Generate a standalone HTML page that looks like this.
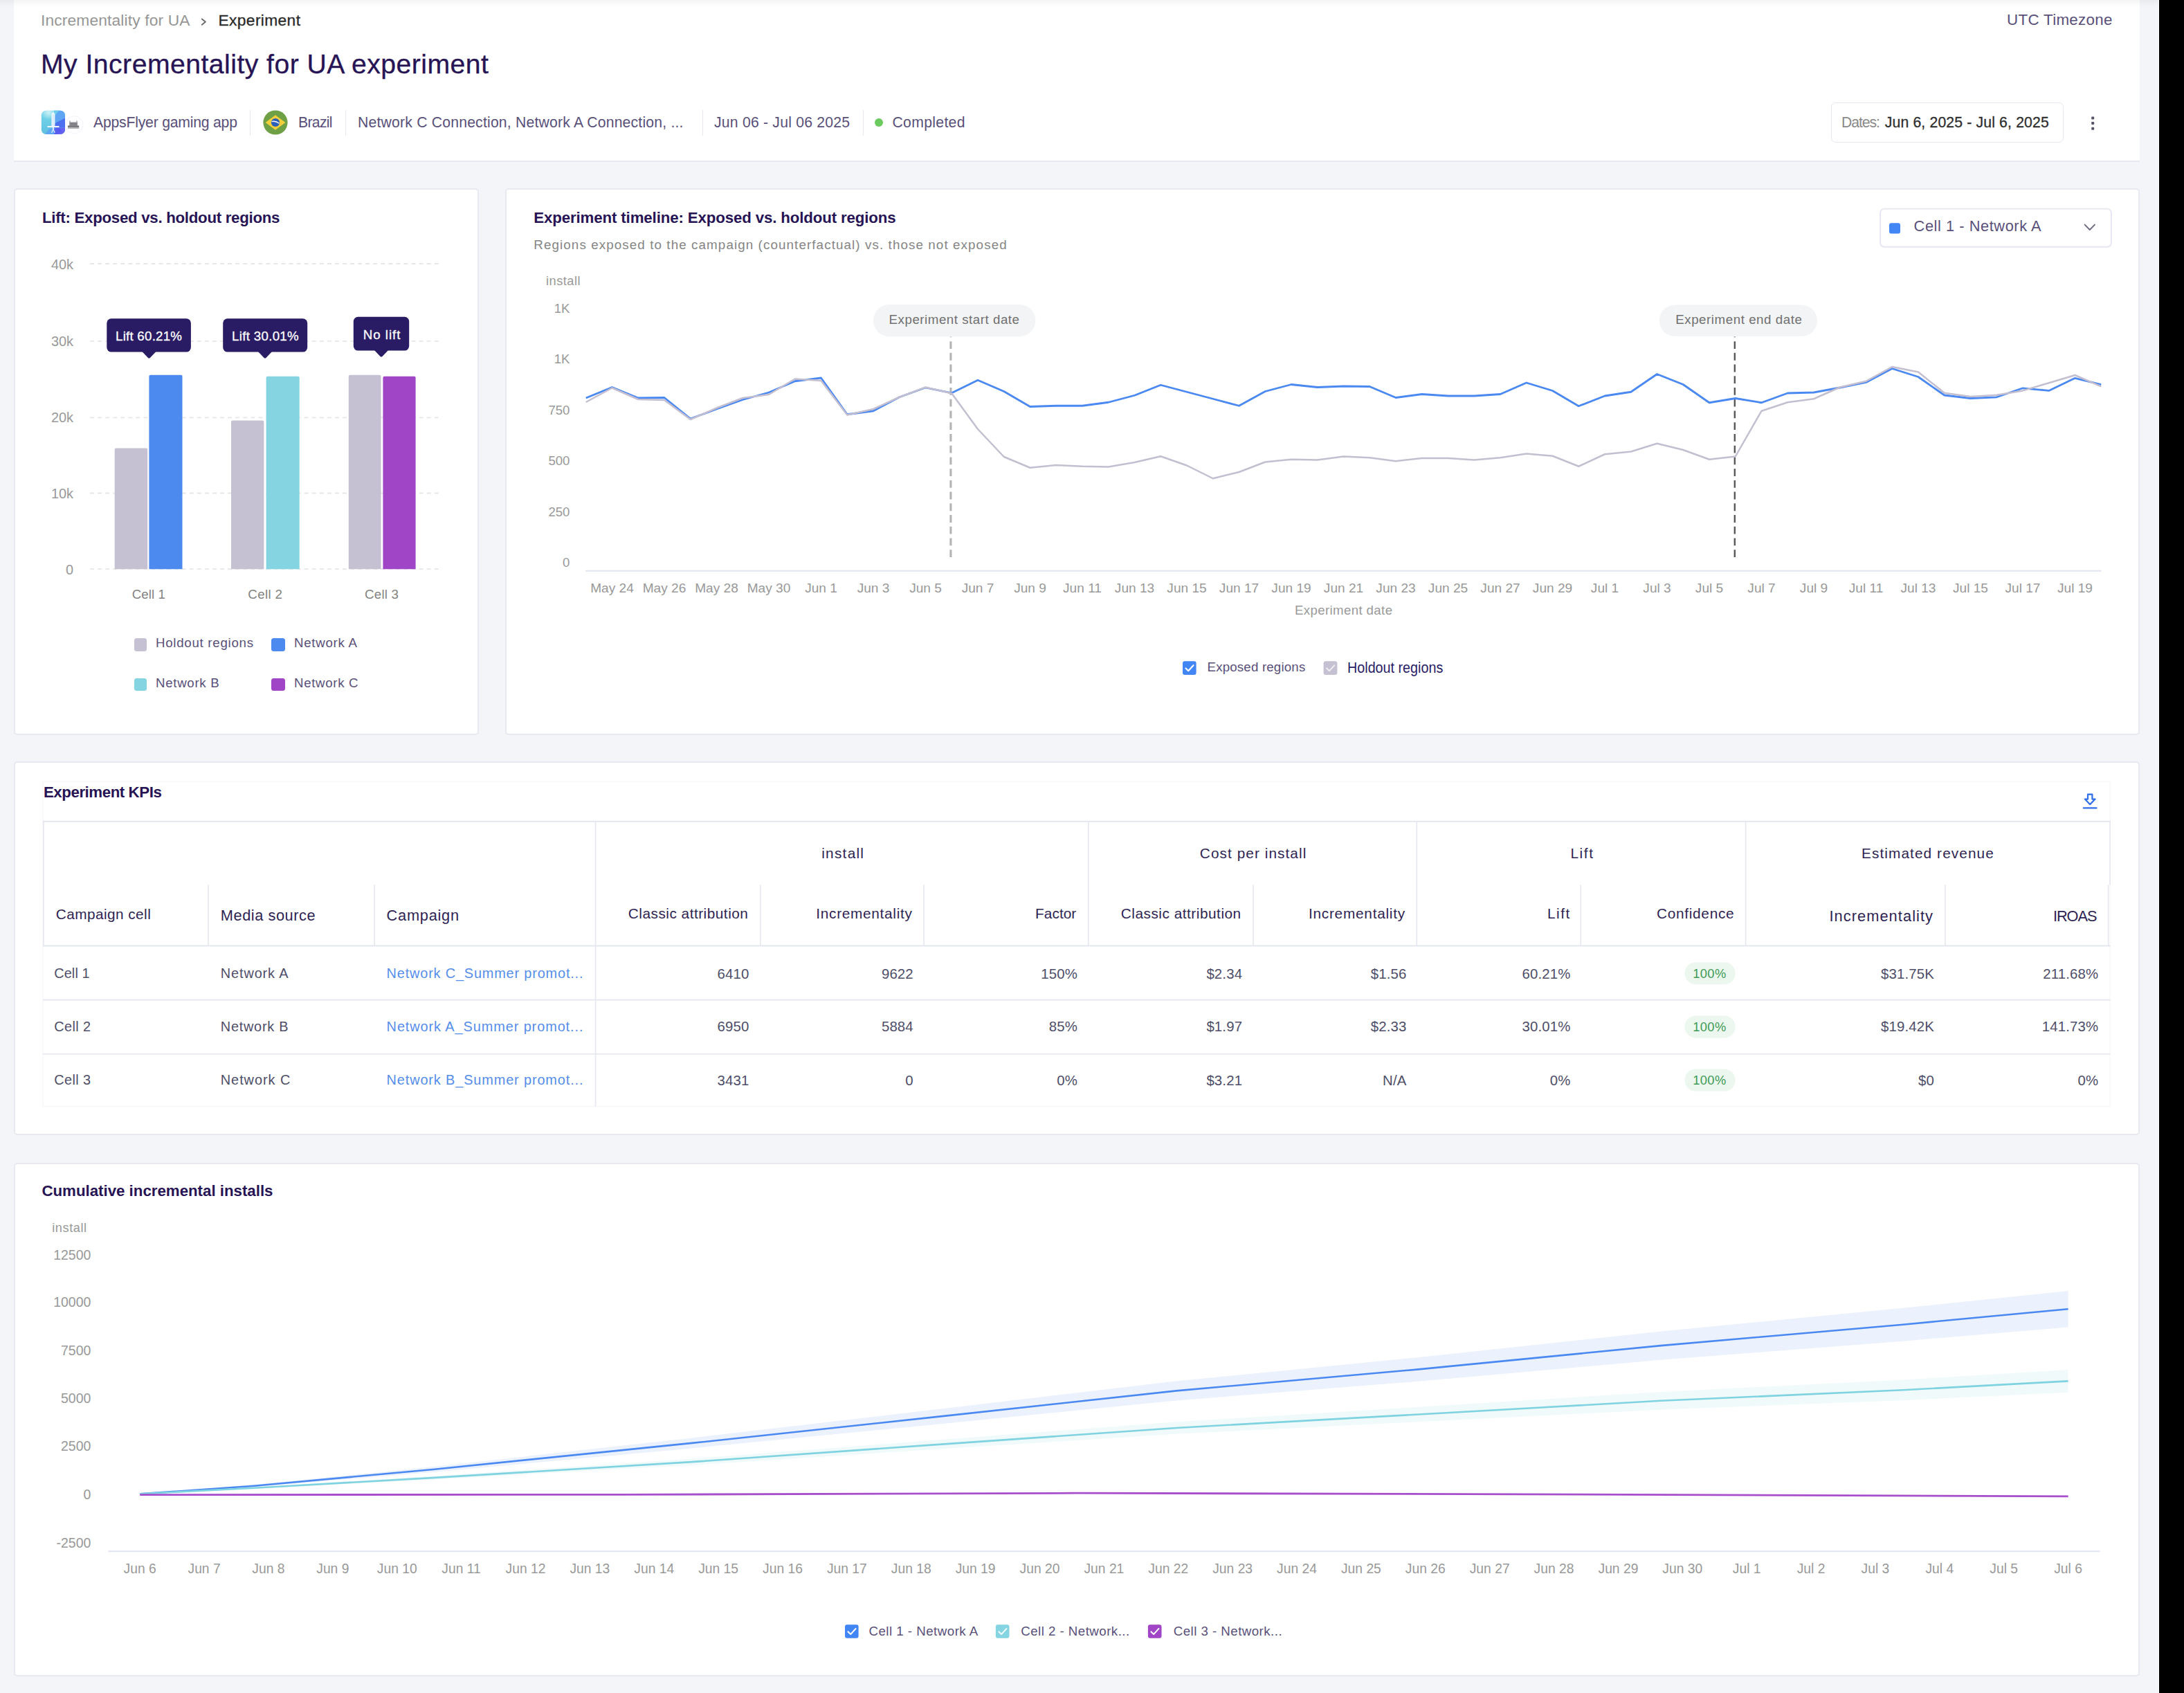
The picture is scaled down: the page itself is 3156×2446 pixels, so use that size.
<!DOCTYPE html>
<html lang="en"><head><meta charset="utf-8"><title>My Incrementality for UA experiment</title>
<style>
html,body{margin:0;padding:0;}
body{width:3156px;height:2446px;overflow:hidden;background:#000;font-family:"Liberation Sans", sans-serif;}
#page{position:relative;width:3156px;height:2446px;overflow:hidden;background:#f4f5f8;}
.a{position:absolute;}
.t{position:absolute;white-space:nowrap;line-height:1;font-family:"Liberation Sans", sans-serif;}
svg{position:absolute;left:0;top:0;overflow:visible;}
</style></head><body><div id="page">
<div class="a" style="left:19.90px;top:0.00px;width:3072.10px;height:234.20px;background:#fff;border-bottom:2.3px solid #e7e8f0;box-sizing:border-box;"></div>
<div class="a" style="left:0;top:0;width:3120px;height:10px;background:linear-gradient(to bottom,rgba(0,0,0,0.042),rgba(0,0,0,0.022) 45%,rgba(0,0,0,0));"></div>
<div class="a" style="left:3118.80px;top:0.00px;width:1.60px;height:2446.00px;background:#fff;"></div>
<div class="a" style="left:3120.20px;top:0.00px;width:35.80px;height:2446.00px;background:#000;"></div>
<svg width="3156" height="2446"><polyline points="291.8,27.4 296.9,31.6 291.8,35.8" fill="none" stroke="#6a6a6a" stroke-width="1.9" stroke-linecap="round" stroke-linejoin="round"/></svg>
<svg width="3156" height="2446">
<defs><linearGradient id="ig" x1="0" y1="0" x2="0" y2="1"><stop offset="0" stop-color="#86dcec"/><stop offset="0.35" stop-color="#6dd0e6"/><stop offset="1" stop-color="#60c0e2"/></linearGradient>
<radialGradient id="ih" cx="0.3" cy="0.08" r="0.3"><stop offset="0" stop-color="#d4f4f8" stop-opacity="0.9"/><stop offset="1" stop-color="#d4f4f8" stop-opacity="0"/></radialGradient>
<clipPath id="ic"><rect x="59.8" y="159.8" width="34.2" height="34.3" rx="6.8"/></clipPath></defs>
<rect x="59.8" y="159.8" width="34.2" height="34.3" rx="6.8" fill="url(#ig)"/>
<g clip-path="url(#ic)">
<rect x="59.8" y="159.8" width="34.2" height="34.3" fill="url(#ih)"/>
<path d="M78.2 159 L95 159 L95 170.1 L82.2 176.4 L82.2 184.4 L78.2 184.4 Z" fill="#5fa5f3"/>
<path d="M78.2 159 L86 159 L80 166 L78.2 170 Z" fill="#6fdbe8" opacity="0.75"/>
<path d="M82.2 176.4 L95 170.1 L95 184.4 L78.2 184.4 L78.2 180 Z" fill="#4c70f0"/>
<path d="M78.2 184.4 L95 184.4 L95 195 L78.2 195 Z" fill="#6862f3"/>
<path d="M64.7 195 L70.5 186.8 L78.2 184.4 L82 186 L80 195 Z" fill="#5da6f2"/>
<path d="M78.2 186 L86 184.4 L90 190 L80 195 L78.2 195 Z" fill="#5458ee" opacity="0.8"/>
</g>
<path d="M76.9 161.8 L79.4 164.6 L79.4 182.4 L74.4 182.4 L74.4 164.6 Z" fill="#f0f7ff" opacity="0.95"/>
<rect x="76.2" y="165" width="1.4" height="16.5" fill="#cfe2f8" opacity="0.8"/>
<rect x="68.3" y="182.1" width="17.4" height="2" rx="0.8" fill="#f4f8ff"/>
<rect x="76" y="184" width="1.9" height="2.8" fill="#e8eeff" opacity="0.9"/>
<path d="M74.6 191.7 L76.95 186.6 L79.3 191.7" fill="none" stroke="#e9efff" stroke-width="1.3" opacity="0.95"/>
<circle cx="107.4" cy="180.3" r="12.2" fill="#fff"/>
<circle cx="107.4" cy="180.3" r="12.5" fill="none" stroke="#f3f5fb" stroke-width="1.2"/>
<path d="M98 185.7 L98 181.6 L100.2 181.6 L100.2 176.6 L112 176.6 L112 181.6 L114.1 181.6 L114.1 185.7 Z" fill="#8e8e92"/>
<rect x="98" y="181.6" width="16.1" height="2.3" fill="#76777b"/>
<rect x="98" y="183.9" width="16.1" height="1.8" fill="#b9b9bb"/>
<rect x="100.3" y="174.3" width="1.3" height="2.6" fill="#a2a2a5"/>
<rect x="110.3" y="174.3" width="1.3" height="2.6" fill="#a2a2a5"/>
<rect x="101.8" y="178.3" width="8.6" height="1.6" fill="#7a7a7e"/>
</svg>
<div class="a" style="left:360.50px;top:158.50px;width:1.40px;height:37.00px;background:#e8e8f0;"></div>
<svg width="3156" height="2446">
<circle cx="398" cy="177" r="17.6" fill="#70a045"/>
<path d="M383.6 177 L398 166.2 L412.4 177 L398 187.8 Z" fill="#f3cf3a"/>
<circle cx="398" cy="177" r="6.1" fill="#2c5fb8"/>
<path d="M392.6 175.6 Q398 174.2 403.5 178.2" fill="none" stroke="#fff" stroke-width="1.4"/>
</svg>
<div class="a" style="left:498.50px;top:158.50px;width:1.40px;height:37.00px;background:#e8e8f0;"></div>
<div class="a" style="left:1014.50px;top:158.50px;width:1.40px;height:37.00px;background:#e8e8f0;"></div>
<div class="a" style="left:1246.50px;top:158.50px;width:1.40px;height:37.00px;background:#e8e8f0;"></div>
<div class="a" style="left:1264px;top:171px;width:12.4px;height:12.4px;border-radius:50%;background:#6ccb5f;"></div>
<div class="a" style="left:2646.00px;top:148.20px;width:336.00px;height:57.60px;background:#fff;border:1.9px solid #e5e6f1;box-sizing:border-box;border-radius:6.5px;"></div>
<svg width="3156" height="2446"><rect x="3022.2" y="168.4" width="4" height="4" rx="1.2" fill="#55556a"/><rect x="3022.2" y="176" width="4" height="4" rx="1.2" fill="#55556a"/><rect x="3022.2" y="183.8" width="4" height="4" rx="1.2" fill="#55556a"/></svg>
<div class="a" style="left:19.90px;top:271.80px;width:672.20px;height:790.30px;background:#fff;border:2.1px solid #e7e8f0;box-sizing:border-box;border-radius:5px;"></div>
<svg width="3156" height="2446"><line x1="130" y1="381" x2="636" y2="381" stroke="#e7e7ea" stroke-width="1.8" stroke-dasharray="6 5.06"/><line x1="130" y1="492.8" x2="636" y2="492.8" stroke="#e7e7ea" stroke-width="1.8" stroke-dasharray="6 5.06"/><line x1="130" y1="603.3" x2="636" y2="603.3" stroke="#e7e7ea" stroke-width="1.8" stroke-dasharray="6 5.06"/><line x1="130" y1="712.5" x2="636" y2="712.5" stroke="#e7e7ea" stroke-width="1.8" stroke-dasharray="6 5.06"/><line x1="130" y1="822.2" x2="636" y2="822.2" stroke="#e7e7ea" stroke-width="1.8" stroke-dasharray="6 5.06"/><path d="M165.7 822.2 L165.7 649.6 Q165.7 647.6 167.7 647.6 L211.2 647.6 Q213.2 647.6 213.2 649.6 L213.2 822.2 Z" fill="#c5c1d2"/><path d="M215.4 822.2 L215.4 543.8 Q215.4 541.8 217.4 541.8 L261.5 541.8 Q263.5 541.8 263.5 543.8 L263.5 822.2 Z" fill="#4d8af0"/><path d="M334 822.2 L334 609.5 Q334 607.5 336 607.5 L379.4 607.5 Q381.4 607.5 381.4 609.5 L381.4 822.2 Z" fill="#c5c1d2"/><path d="M384.6 822.2 L384.6 545.7 Q384.6 543.7 386.6 543.7 L430.7 543.7 Q432.7 543.7 432.7 545.7 L432.7 822.2 Z" fill="#84d4e2"/><path d="M503.8 822.2 L503.8 543.8 Q503.8 541.8 505.8 541.8 L548.6 541.8 Q550.6 541.8 550.6 543.8 L550.6 822.2 Z" fill="#c5c1d2"/><path d="M553.4 822.2 L553.4 545.7 Q553.4 543.7 555.4 543.7 L598.6 543.7 Q600.6 543.7 600.6 545.7 L600.6 822.2 Z" fill="#a045c5"/><rect x="154.3" y="460.3" width="121.59999999999997" height="48.30000000000001" rx="6.5" fill="#2a1c64"/><path d="M205.4 508.1 L225.4 508.1 L216.6 517.2 Q215.4 518 214.20000000000002 517.2 Z" fill="#2a1c64"/><rect x="322.2" y="460.3" width="122.0" height="48.30000000000001" rx="6.5" fill="#2a1c64"/><path d="M373 508.1 L393 508.1 L384.2 517.2 Q383 518 381.8 517.2 Z" fill="#2a1c64"/><rect x="510.8" y="457.8" width="80.40000000000003" height="48.80000000000001" rx="6.5" fill="#2a1c64"/><path d="M541 506.1 L561 506.1 L552.2 515.2 Q551 516 549.8 515.2 Z" fill="#2a1c64"/></svg>
<div class="a" style="left:194.00px;top:922.00px;width:18.00px;height:19.00px;background:#c5c1d2;border-radius:3.5px;"></div>
<div class="a" style="left:392.00px;top:922.00px;width:20.00px;height:19.00px;background:#4d8af0;border-radius:3.5px;"></div>
<div class="a" style="left:194.00px;top:980.00px;width:18.00px;height:18.00px;background:#84d4e2;border-radius:3.5px;"></div>
<div class="a" style="left:392.00px;top:980.00px;width:20.00px;height:18.00px;background:#a045c5;border-radius:3.5px;"></div>
<div class="a" style="left:730.00px;top:271.80px;width:2361.90px;height:790.30px;background:#fff;border:2.1px solid #e7e8f0;box-sizing:border-box;border-radius:5px;"></div>
<svg width="3156" height="2446"><rect x="1262" y="440" width="234.4" height="46.2" rx="23.1" fill="#f3f4f6"/><rect x="2397.8" y="440.4" width="228.2" height="45.4" rx="22.7" fill="#f3f4f6"/><line x1="846" y1="824.8" x2="3036.5" y2="824.8" stroke="#e1e5f1" stroke-width="2"/><line x1="1373.9" y1="486.4" x2="1373.9" y2="806.5" stroke="#b4b4b4" stroke-width="3.1" stroke-dasharray="10.8 5.93" stroke-dashoffset="10"/><line x1="2506.8" y1="486.4" x2="2506.8" y2="806.5" stroke="#585858" stroke-width="2.4" stroke-dasharray="10.8 5.93" stroke-dashoffset="10"/><polyline points="846.75,575.00 884.50,559.50 922.25,575.00 960.00,574.50 997.75,605.00 1035.50,591.00 1073.25,577.50 1111.00,567.00 1148.75,550.75 1186.50,546.00 1224.25,598.75 1262.00,593.75 1299.75,573.75 1337.50,560.00 1375.25,567.80 1413.00,549.25 1450.75,565.50 1488.50,587.50 1526.25,586.25 1564.00,586.25 1601.75,581.25 1639.50,571.25 1677.25,556.25 1715.00,566.25 1752.75,576.25 1790.50,586.25 1828.25,565.50 1866.00,555.50 1903.75,559.50 1941.50,558.00 1979.25,558.50 2017.00,574.50 2054.75,569.50 2092.50,572.00 2130.25,572.00 2168.00,569.50 2205.75,553.00 2243.50,564.50 2281.25,586.75 2319.00,572.00 2356.75,566.25 2394.50,540.50 2432.25,555.50 2470.00,581.75 2507.75,575.50 2545.50,581.75 2583.25,568.00 2621.00,567.00 2658.75,560.00 2696.50,552.50 2734.25,532.50 2772.00,544.50 2809.75,571.00 2847.50,575.50 2885.25,573.80 2923.00,560.80 2960.75,564.40 2998.50,546.30 3036.25,555.70" fill="none" stroke="#4a88f2" stroke-width="2.8" stroke-linejoin="round" stroke-linecap="butt"/><polyline points="846.75,581.00 884.50,560.50 922.25,577.00 960.00,578.00 997.75,606.00 1035.50,589.50 1073.25,575.00 1111.00,570.00 1148.75,547.50 1186.50,550.00 1224.25,599.50 1262.00,591.00 1299.75,573.75 1337.50,559.50 1375.25,568.20 1413.00,620.00 1450.75,660.00 1488.50,675.75 1526.25,672.00 1564.00,673.75 1601.75,674.50 1639.50,668.00 1677.25,659.25 1715.00,672.50 1752.75,691.25 1790.50,682.00 1828.25,667.50 1866.00,663.75 1903.75,664.50 1941.50,659.50 1979.25,661.25 2017.00,666.25 2054.75,662.00 2092.50,662.00 2130.25,664.50 2168.00,661.25 2205.75,655.50 2243.50,658.75 2281.25,673.75 2319.00,656.25 2356.75,652.50 2394.50,640.75 2432.25,650.00 2470.00,663.75 2507.75,659.50 2545.50,593.75 2583.25,581.25 2621.00,576.25 2658.75,559.50 2696.50,550.75 2734.25,530.00 2772.00,537.50 2809.75,567.80 2847.50,573.10 2885.25,570.80 2923.00,564.40 2960.75,553.20 2998.50,542.00 3036.25,558.30" fill="none" stroke="#c3bfd0" stroke-width="2.5" stroke-linejoin="round" stroke-linecap="butt"/><rect x="2717.1" y="301.6" width="333.8" height="55.2" rx="6" fill="#fff" stroke="#e5e6f1" stroke-width="1.9"/><rect x="2730" y="322.2" width="16" height="15.4" rx="3" fill="#4285f4"/><polyline points="3012.6,324.6 3019.8,332 3027,324.6" fill="none" stroke="#6f6a82" stroke-width="1.9" stroke-linecap="round" stroke-linejoin="round"/><rect x="1709" y="955.3" width="19.6" height="19.6" rx="3" fill="#4285f4"/><polyline points="1713.51,965.49 1717.23,969.22 1724.48,961.18" fill="none" stroke="#fff" stroke-width="2.1" stroke-linecap="round" stroke-linejoin="round"/><rect x="1912.6" y="955.3" width="19.8" height="19.8" rx="3" fill="#c5c1d2"/><polyline points="1917.15,965.60 1920.92,969.36 1928.24,961.24" fill="none" stroke="#eeecf3" stroke-width="2.1" stroke-linecap="round" stroke-linejoin="round"/></svg>
<div class="a" style="left:19.90px;top:1100.00px;width:3072.00px;height:540.10px;background:#fff;border:2.1px solid #e7e8f0;box-sizing:border-box;border-radius:5px;"></div>
<svg width="3156" height="2446"><rect x="62" y="1129.2" width="2987.4" height="469.4" fill="none" stroke="#f8f8fa" stroke-width="1.6"/><line x1="62" y1="1186.7" x2="3049.8" y2="1186.7" stroke="#e5e7f0" stroke-width="2"/><line x1="62" y1="1366.4" x2="3049.8" y2="1366.4" stroke="#e5e7f0" stroke-width="2"/><line x1="62" y1="1444.6" x2="3049.8" y2="1444.6" stroke="#e5e7f0" stroke-width="1.6"/><line x1="62" y1="1522.8" x2="3049.8" y2="1522.8" stroke="#e5e7f0" stroke-width="1.6"/><line x1="62.9" y1="1186.7" x2="62.9" y2="1366.4" stroke="#e5e7f0" stroke-width="1.6"/><line x1="301" y1="1278.3" x2="301" y2="1366.4" stroke="#e5e7f0" stroke-width="1.6"/><line x1="541.2" y1="1278.3" x2="541.2" y2="1366.4" stroke="#e5e7f0" stroke-width="1.6"/><line x1="860.6" y1="1186.7" x2="860.6" y2="1599" stroke="#e5e7f0" stroke-width="1.6"/><line x1="1098.7" y1="1278.3" x2="1098.7" y2="1366.4" stroke="#e5e7f0" stroke-width="1.6"/><line x1="1335" y1="1278.3" x2="1335" y2="1366.4" stroke="#e5e7f0" stroke-width="1.6"/><line x1="1572.8" y1="1186.7" x2="1572.8" y2="1366.4" stroke="#e5e7f0" stroke-width="1.6"/><line x1="1811" y1="1278.3" x2="1811" y2="1366.4" stroke="#e5e7f0" stroke-width="1.6"/><line x1="2047.3" y1="1186.7" x2="2047.3" y2="1366.4" stroke="#e5e7f0" stroke-width="1.6"/><line x1="2284.3" y1="1278.3" x2="2284.3" y2="1366.4" stroke="#e5e7f0" stroke-width="1.6"/><line x1="2522.6" y1="1186.7" x2="2522.6" y2="1366.4" stroke="#e5e7f0" stroke-width="1.6"/><line x1="2810.9" y1="1278.3" x2="2810.9" y2="1366.4" stroke="#e5e7f0" stroke-width="1.6"/><line x1="3049" y1="1186.7" x2="3049" y2="1278.3" stroke="#e5e7f0" stroke-width="1.6"/><line x1="3046.6" y1="1278.3" x2="3046.6" y2="1366.4" stroke="#e5e7f0" stroke-width="1.6"/><g fill="none" stroke="#2f6fe8" stroke-width="2.2" stroke-linejoin="round" stroke-linecap="round"><path d="M3017 1147.6 h6.4 v7 h4.2 l-7.4 7.6 l-7.4 -7.6 h4.2 z"/><line x1="3010.8" y1="1167.4" x2="3029.6" y2="1167.4"/></g><rect x="2434.4" y="1390.3" width="73.3" height="32" rx="16" fill="#ecf8ef"/><rect x="2434.4" y="1467.5" width="73.3" height="32" rx="16" fill="#ecf8ef"/><rect x="2434.4" y="1544.6" width="73.3" height="32" rx="16" fill="#ecf8ef"/></svg>
<div class="a" style="left:19.90px;top:1680.20px;width:3072.00px;height:741.70px;background:#fff;border:2.1px solid #e7e8f0;box-sizing:border-box;border-radius:5px;"></div>
<svg width="3156" height="2446"><line x1="156.4" y1="2241.3" x2="3034.6" y2="2241.3" stroke="#e1e5f1" stroke-width="2"/><polygon points="202.2,2158.4 367.5,2145.1 628.5,2118.7 1000.0,2077.4 1350.0,2036.6 1700.0,1995.3 2050.0,1961.0 2400.0,1923.4 2750.0,1889.7 2988.6,1865.1 2988.6,1917.5 2750.0,1937.7 2400.0,1964.8 2050.0,1995.8 1700.0,2023.5 1350.0,2058.2 1000.0,2092.4 628.5,2126.7 367.5,2148.3 202.2,2158.4" fill="#ecf2fd"/><polygon points="202.2,2158.4 367.5,2148.7 628.5,2132.4 1000.0,2107.4 1350.0,2080.7 1700.0,2054.2 2050.0,2032.7 2400.0,2010.9 2750.0,1993.4 2988.6,1979.1 2988.6,2011.7 2750.0,2023.2 2400.0,2036.7 2050.0,2054.3 1700.0,2071.8 1350.0,2094.1 1000.0,2116.8 628.5,2137.4 367.5,2150.7 202.2,2158.4" fill="#f0fafb"/><polyline points="202.2,2158.4 367.5,2146.7 628.5,2122.7 1000.0,2084.9 1350.0,2047.4 1700.0,2009.4 2050.0,1978.4 2400.0,1944.1 2750.0,1913.7 2988.6,1891.3" fill="none" stroke="#4a88f2" stroke-width="2.6" stroke-linejoin="round"/><polyline points="202.2,2158.4 367.5,2149.7 628.5,2134.9 1000.0,2112.1 1350.0,2087.4 1700.0,2063.0 2050.0,2043.5 2400.0,2023.8 2750.0,2008.3 2988.6,1995.4" fill="none" stroke="#7fd3e0" stroke-width="2.6" stroke-linejoin="round"/><polyline points="202.2,2159.6 900.0,2159.4 1556.0,2157.2 2200.0,2158.8 2988.6,2161.9" fill="none" stroke="#a74fcb" stroke-width="2.8" stroke-linejoin="round"/><rect x="1221" y="2347.2" width="19.6" height="19.6" rx="3" fill="#4285f4"/><polyline points="1225.51,2357.39 1229.23,2361.12 1236.48,2353.08" fill="none" stroke="#fff" stroke-width="2.1" stroke-linecap="round" stroke-linejoin="round"/><rect x="1438.9" y="2347.2" width="19.6" height="19.6" rx="3" fill="#84d4e2"/><polyline points="1443.41,2357.39 1447.13,2361.12 1454.38,2353.08" fill="none" stroke="#f2fbfc" stroke-width="2.1" stroke-linecap="round" stroke-linejoin="round"/><rect x="1658.9" y="2347.2" width="19.6" height="19.6" rx="3" fill="#a045c5"/><polyline points="1663.41,2357.39 1667.13,2361.12 1674.38,2353.08" fill="none" stroke="#fff" stroke-width="2.1" stroke-linecap="round" stroke-linejoin="round"/></svg>
<span class="t" id="t0" style="top:17.60px;font-size:22.8px;color:#969696;letter-spacing:0.133px;left:59.00px;">Incrementality for UA</span>
<span class="t" id="t1" style="top:17.60px;font-size:22.8px;color:#2a2a2a;letter-spacing:0.354px;-webkit-text-stroke:0.3px currentColor;left:315.50px;">Experiment</span>
<span class="t" id="t2" style="top:17.64px;font-size:22.4px;color:#595079;letter-spacing:0.290px;left:2900.00px;">UTC Timezone</span>
<span class="t" id="t3" style="top:72.82px;font-size:39.2px;color:#271454;letter-spacing:0.454px;-webkit-text-stroke:0.3px currentColor;left:59.00px;">My Incrementality for UA experiment</span>
<span class="t" id="t4" style="top:166.05px;font-size:21.2px;color:#595079;letter-spacing:-0.211px;left:135.00px;">AppsFlyer gaming app</span>
<span class="t" id="t5" style="top:166.05px;font-size:21.2px;color:#595079;letter-spacing:-0.697px;left:431.00px;">Brazil</span>
<span class="t" id="t6" style="top:165.95px;font-size:21.2px;color:#595079;letter-spacing:0.193px;left:517.00px;">Network C Connection, Network A Connection, ...</span>
<span class="t" id="t7" style="top:166.05px;font-size:21.2px;color:#595079;letter-spacing:0.210px;left:1032.00px;">Jun 06 - Jul 06 2025</span>
<span class="t" id="t8" style="top:166.05px;font-size:21.2px;color:#595079;letter-spacing:0.316px;left:1289.50px;">Completed</span>
<span class="t" id="t9" style="top:166.05px;font-size:21.2px;color:#8a8a8a;letter-spacing:-1.050px;left:2661.00px;">Dates:</span>
<span class="t" id="t10" style="top:166.05px;font-size:21.2px;color:#2e2e2e;letter-spacing:0.157px;-webkit-text-stroke:0.3px currentColor;left:2723.75px;">Jun 6, 2025 - Jul 6, 2025</span>
<span class="t" id="t11" style="top:303.92px;font-size:22.3px;color:#271454;font-weight:700;letter-spacing:-0.299px;left:61.00px;">Lift: Exposed vs. holdout regions</span>
<span class="t" id="t12" style="top:373.45px;font-size:19.9px;color:#999999;right:3050.00px;">40k</span>
<span class="t" id="t13" style="top:483.55px;font-size:19.9px;color:#999999;right:3050.00px;">30k</span>
<span class="t" id="t14" style="top:593.65px;font-size:19.9px;color:#999999;right:3050.00px;">20k</span>
<span class="t" id="t15" style="top:703.55px;font-size:19.9px;color:#999999;right:3050.00px;">10k</span>
<span class="t" id="t16" style="top:814.05px;font-size:19.9px;color:#999999;right:3050.00px;">0</span>
<span class="t" id="t17" style="top:476.97px;font-size:18.7px;color:#fff;letter-spacing:0.248px;-webkit-text-stroke:0.3px currentColor;left:167.00px;">Lift 60.21%</span>
<span class="t" id="t18" style="top:476.97px;font-size:18.7px;color:#fff;letter-spacing:0.318px;-webkit-text-stroke:0.3px currentColor;left:335.00px;">Lift 30.01%</span>
<span class="t" id="t19" style="top:475.17px;font-size:18.7px;color:#fff;letter-spacing:1.003px;-webkit-text-stroke:0.3px currentColor;left:524.70px;">No lift</span>
<span class="t" id="t20" style="top:850.47px;font-size:18.7px;color:#828282;letter-spacing:0.064px;left:190.70px;">Cell 1</span>
<span class="t" id="t21" style="top:850.47px;font-size:18.7px;color:#828282;letter-spacing:0.384px;left:358.30px;">Cell 2</span>
<span class="t" id="t22" style="top:850.47px;font-size:18.7px;color:#828282;letter-spacing:0.244px;left:527.00px;">Cell 3</span>
<span class="t" id="t23" style="top:920.37px;font-size:18.7px;color:#595079;letter-spacing:0.721px;left:225.00px;">Holdout regions</span>
<span class="t" id="t24" style="top:920.37px;font-size:18.7px;color:#595079;letter-spacing:0.729px;left:425.00px;">Network A</span>
<span class="t" id="t25" style="top:978.17px;font-size:18.7px;color:#595079;letter-spacing:0.687px;left:225.00px;">Network B</span>
<span class="t" id="t26" style="top:978.17px;font-size:18.7px;color:#595079;letter-spacing:0.671px;left:425.00px;">Network C</span>
<span class="t" id="t27" style="top:304.02px;font-size:22.3px;color:#271454;font-weight:700;letter-spacing:-0.146px;left:771.30px;">Experiment timeline: Exposed vs. holdout regions</span>
<span class="t" id="t28" style="top:344.69px;font-size:18.8px;color:#858585;letter-spacing:1.097px;left:771.30px;">Regions exposed to the campaign (counterfactual) vs. those not exposed</span>
<span class="t" id="t29" style="top:396.59px;font-size:18.2px;color:#999999;letter-spacing:0.517px;left:789.00px;">install</span>
<span class="t" id="t30" style="top:436.56px;font-size:18.6px;color:#999999;right:2332.60px;">1K</span>
<span class="t" id="t31" style="top:510.06px;font-size:18.6px;color:#999999;right:2332.60px;">1K</span>
<span class="t" id="t32" style="top:583.56px;font-size:18.6px;color:#999999;right:2332.60px;">750</span>
<span class="t" id="t33" style="top:657.06px;font-size:18.6px;color:#999999;right:2332.60px;">500</span>
<span class="t" id="t34" style="top:730.56px;font-size:18.6px;color:#999999;right:2332.60px;">250</span>
<span class="t" id="t35" style="top:804.06px;font-size:18.6px;color:#999999;right:2332.60px;">0</span>
<span class="t" id="t36" style="top:453.07px;font-size:18.7px;color:#707070;letter-spacing:0.539px;left:1284.60px;">Experiment start date</span>
<span class="t" id="t37" style="top:453.07px;font-size:18.7px;color:#707070;letter-spacing:0.569px;left:2421.20px;">Experiment end date</span>
<span class="t" id="t38" style="top:316.45px;font-size:21.8px;color:#595079;letter-spacing:0.562px;left:2765.60px;">Cell 1 - Network A</span>
<span class="t" id="t39" style="top:840.33px;font-size:19.1px;color:#999999;left:884.50px;transform:translateX(-50%);">May 24</span>
<span class="t" id="t40" style="top:840.33px;font-size:19.1px;color:#999999;left:960.00px;transform:translateX(-50%);">May 26</span>
<span class="t" id="t41" style="top:840.33px;font-size:19.1px;color:#999999;left:1035.50px;transform:translateX(-50%);">May 28</span>
<span class="t" id="t42" style="top:840.33px;font-size:19.1px;color:#999999;left:1111.00px;transform:translateX(-50%);">May 30</span>
<span class="t" id="t43" style="top:840.33px;font-size:19.1px;color:#999999;left:1186.50px;transform:translateX(-50%);">Jun 1</span>
<span class="t" id="t44" style="top:840.33px;font-size:19.1px;color:#999999;left:1262.00px;transform:translateX(-50%);">Jun 3</span>
<span class="t" id="t45" style="top:840.33px;font-size:19.1px;color:#999999;left:1337.50px;transform:translateX(-50%);">Jun 5</span>
<span class="t" id="t46" style="top:840.33px;font-size:19.1px;color:#999999;left:1413.00px;transform:translateX(-50%);">Jun 7</span>
<span class="t" id="t47" style="top:840.33px;font-size:19.1px;color:#999999;left:1488.50px;transform:translateX(-50%);">Jun 9</span>
<span class="t" id="t48" style="top:840.33px;font-size:19.1px;color:#999999;left:1564.00px;transform:translateX(-50%);">Jun 11</span>
<span class="t" id="t49" style="top:840.33px;font-size:19.1px;color:#999999;left:1639.50px;transform:translateX(-50%);">Jun 13</span>
<span class="t" id="t50" style="top:840.33px;font-size:19.1px;color:#999999;left:1715.00px;transform:translateX(-50%);">Jun 15</span>
<span class="t" id="t51" style="top:840.33px;font-size:19.1px;color:#999999;left:1790.50px;transform:translateX(-50%);">Jun 17</span>
<span class="t" id="t52" style="top:840.33px;font-size:19.1px;color:#999999;left:1866.00px;transform:translateX(-50%);">Jun 19</span>
<span class="t" id="t53" style="top:840.33px;font-size:19.1px;color:#999999;left:1941.50px;transform:translateX(-50%);">Jun 21</span>
<span class="t" id="t54" style="top:840.33px;font-size:19.1px;color:#999999;left:2017.00px;transform:translateX(-50%);">Jun 23</span>
<span class="t" id="t55" style="top:840.33px;font-size:19.1px;color:#999999;left:2092.50px;transform:translateX(-50%);">Jun 25</span>
<span class="t" id="t56" style="top:840.33px;font-size:19.1px;color:#999999;left:2168.00px;transform:translateX(-50%);">Jun 27</span>
<span class="t" id="t57" style="top:840.33px;font-size:19.1px;color:#999999;left:2243.50px;transform:translateX(-50%);">Jun 29</span>
<span class="t" id="t58" style="top:840.33px;font-size:19.1px;color:#999999;left:2319.00px;transform:translateX(-50%);">Jul 1</span>
<span class="t" id="t59" style="top:840.33px;font-size:19.1px;color:#999999;left:2394.50px;transform:translateX(-50%);">Jul 3</span>
<span class="t" id="t60" style="top:840.33px;font-size:19.1px;color:#999999;left:2470.00px;transform:translateX(-50%);">Jul 5</span>
<span class="t" id="t61" style="top:840.33px;font-size:19.1px;color:#999999;left:2545.50px;transform:translateX(-50%);">Jul 7</span>
<span class="t" id="t62" style="top:840.33px;font-size:19.1px;color:#999999;left:2621.00px;transform:translateX(-50%);">Jul 9</span>
<span class="t" id="t63" style="top:840.33px;font-size:19.1px;color:#999999;left:2696.50px;transform:translateX(-50%);">Jul 11</span>
<span class="t" id="t64" style="top:840.33px;font-size:19.1px;color:#999999;left:2772.00px;transform:translateX(-50%);">Jul 13</span>
<span class="t" id="t65" style="top:840.33px;font-size:19.1px;color:#999999;left:2847.50px;transform:translateX(-50%);">Jul 15</span>
<span class="t" id="t66" style="top:840.33px;font-size:19.1px;color:#999999;left:2923.00px;transform:translateX(-50%);">Jul 17</span>
<span class="t" id="t67" style="top:840.33px;font-size:19.1px;color:#999999;left:2998.50px;transform:translateX(-50%);">Jul 19</span>
<span class="t" id="t68" style="top:873.16px;font-size:18.6px;color:#999999;letter-spacing:0.400px;left:1871.00px;">Experiment date</span>
<span class="t" id="t69" style="top:954.77px;font-size:18.7px;color:#595079;letter-spacing:0.184px;left:1744.50px;">Exposed regions</span>
<span class="t" id="t70" style="top:954.44px;font-size:22.4px;color:#2b1d66;left:1947.00px;transform:scaleX(0.8818);transform-origin:0 0;">Holdout regions</span>
<span class="t" id="t71" style="top:1133.92px;font-size:22.3px;color:#271454;font-weight:700;letter-spacing:-0.450px;left:62.90px;">Experiment KPIs</span>
<span class="t" id="t72" style="top:1311.19px;font-size:20.8px;color:#2e2452;letter-spacing:0.443px;left:80.70px;">Campaign cell</span>
<span class="t" id="t73" style="top:1312.05px;font-size:21.8px;color:#2e2452;letter-spacing:0.540px;left:318.80px;">Media source</span>
<span class="t" id="t74" style="top:1312.05px;font-size:21.8px;color:#2e2452;letter-spacing:0.734px;left:558.60px;">Campaign</span>
<span class="t" id="t75" style="top:1223.09px;font-size:20.8px;color:#2e2452;letter-spacing:1.271px;left:1187.20px;">install</span>
<span class="t" id="t76" style="top:1310.09px;font-size:20.8px;color:#2e2452;letter-spacing:0.498px;left:907.80px;">Classic attribution</span>
<span class="t" id="t77" style="top:1310.09px;font-size:20.8px;color:#2e2452;letter-spacing:0.704px;left:1179.30px;">Incrementality</span>
<span class="t" id="t78" style="top:1310.09px;font-size:20.8px;color:#2e2452;letter-spacing:0.069px;left:1496.00px;">Factor</span>
<span class="t" id="t79" style="top:1223.09px;font-size:20.8px;color:#2e2452;letter-spacing:1.064px;left:1733.80px;">Cost per install</span>
<span class="t" id="t80" style="top:1310.09px;font-size:20.8px;color:#2e2452;letter-spacing:0.514px;left:1619.80px;">Classic attribution</span>
<span class="t" id="t81" style="top:1310.09px;font-size:20.8px;color:#2e2452;letter-spacing:0.757px;left:1890.90px;">Incrementality</span>
<span class="t" id="t82" style="top:1223.09px;font-size:20.8px;color:#2e2452;letter-spacing:1.617px;left:2269.40px;">Lift</span>
<span class="t" id="t83" style="top:1310.09px;font-size:20.8px;color:#2e2452;letter-spacing:1.483px;left:2236.00px;">Lift</span>
<span class="t" id="t84" style="top:1310.09px;font-size:20.8px;color:#2e2452;letter-spacing:0.709px;left:2394.00px;">Confidence</span>
<span class="t" id="t85" style="top:1223.09px;font-size:20.8px;color:#2e2452;letter-spacing:1.087px;left:2690.00px;">Estimated revenue</span>
<span class="t" id="t86" style="top:1312.55px;font-size:21.8px;color:#2e2452;letter-spacing:1.070px;left:2643.40px;">Incrementality</span>
<span class="t" id="t87" style="top:1312.55px;font-size:21.8px;color:#2e2452;letter-spacing:-1.057px;left:2966.90px;">IROAS</span>
<span class="t" id="t88" style="top:1397.35px;font-size:19.9px;color:#4e4e68;letter-spacing:0.128px;left:78.20px;">Cell 1</span>
<span class="t" id="t89" style="top:1397.35px;font-size:19.9px;color:#4e4e68;letter-spacing:0.880px;left:318.80px;">Network A</span>
<span class="t" id="t90" style="top:1397.35px;font-size:19.9px;color:#558dea;letter-spacing:0.833px;left:558.60px;">Network C_Summer promot...</span>
<span class="t" id="t91" style="top:1396.93px;font-size:20.4px;color:#4e4e68;letter-spacing:0.150px;right:2073.55px;">6410</span>
<span class="t" id="t92" style="top:1396.93px;font-size:20.4px;color:#4e4e68;letter-spacing:0.150px;right:1836.15px;">9622</span>
<span class="t" id="t93" style="top:1396.93px;font-size:20.4px;color:#4e4e68;letter-spacing:0.150px;right:1598.95px;">150%</span>
<span class="t" id="t94" style="top:1396.93px;font-size:20.4px;color:#4e4e68;letter-spacing:0.150px;right:1360.85px;">$2.34</span>
<span class="t" id="t95" style="top:1396.93px;font-size:20.4px;color:#4e4e68;letter-spacing:0.150px;right:1123.55px;">$1.56</span>
<span class="t" id="t96" style="top:1396.93px;font-size:20.4px;color:#4e4e68;letter-spacing:0.150px;right:886.45px;">60.21%</span>
<span class="t" id="t97" style="top:1396.93px;font-size:20.4px;color:#4e4e68;letter-spacing:0.150px;right:361.05px;">$31.75K</span>
<span class="t" id="t98" style="top:1396.93px;font-size:20.4px;color:#4e4e68;letter-spacing:0.150px;right:123.65px;">211.68%</span>
<span class="t" id="t99" style="top:1398.11px;font-size:18.3px;color:#3f9a55;letter-spacing:0.411px;left:2446.20px;">100%</span>
<span class="t" id="t100" style="top:1473.75px;font-size:19.9px;color:#4e4e68;letter-spacing:0.388px;left:78.20px;">Cell 2</span>
<span class="t" id="t101" style="top:1473.75px;font-size:19.9px;color:#4e4e68;letter-spacing:0.744px;left:318.80px;">Network B</span>
<span class="t" id="t102" style="top:1473.75px;font-size:19.9px;color:#558dea;letter-spacing:0.921px;left:558.60px;">Network A_Summer promot...</span>
<span class="t" id="t103" style="top:1473.33px;font-size:20.4px;color:#4e4e68;letter-spacing:0.150px;right:2073.55px;">6950</span>
<span class="t" id="t104" style="top:1473.33px;font-size:20.4px;color:#4e4e68;letter-spacing:0.150px;right:1836.15px;">5884</span>
<span class="t" id="t105" style="top:1473.33px;font-size:20.4px;color:#4e4e68;letter-spacing:0.150px;right:1598.95px;">85%</span>
<span class="t" id="t106" style="top:1473.33px;font-size:20.4px;color:#4e4e68;letter-spacing:0.150px;right:1360.85px;">$1.97</span>
<span class="t" id="t107" style="top:1473.33px;font-size:20.4px;color:#4e4e68;letter-spacing:0.150px;right:1123.55px;">$2.33</span>
<span class="t" id="t108" style="top:1473.33px;font-size:20.4px;color:#4e4e68;letter-spacing:0.150px;right:886.45px;">30.01%</span>
<span class="t" id="t109" style="top:1473.33px;font-size:20.4px;color:#4e4e68;letter-spacing:0.150px;right:361.05px;">$19.42K</span>
<span class="t" id="t110" style="top:1473.33px;font-size:20.4px;color:#4e4e68;letter-spacing:0.150px;right:123.65px;">141.73%</span>
<span class="t" id="t111" style="top:1474.51px;font-size:18.3px;color:#3f9a55;letter-spacing:0.411px;left:2446.20px;">100%</span>
<span class="t" id="t112" style="top:1551.05px;font-size:19.9px;color:#4e4e68;letter-spacing:0.388px;left:78.20px;">Cell 3</span>
<span class="t" id="t113" style="top:1551.05px;font-size:19.9px;color:#4e4e68;letter-spacing:0.957px;left:318.80px;">Network C</span>
<span class="t" id="t114" style="top:1551.05px;font-size:19.9px;color:#558dea;letter-spacing:0.877px;left:558.60px;">Network B_Summer promot...</span>
<span class="t" id="t115" style="top:1550.63px;font-size:20.4px;color:#4e4e68;letter-spacing:0.150px;right:2073.55px;">3431</span>
<span class="t" id="t116" style="top:1550.63px;font-size:20.4px;color:#4e4e68;letter-spacing:0.150px;right:1836.15px;">0</span>
<span class="t" id="t117" style="top:1550.63px;font-size:20.4px;color:#4e4e68;letter-spacing:0.150px;right:1598.95px;">0%</span>
<span class="t" id="t118" style="top:1550.63px;font-size:20.4px;color:#4e4e68;letter-spacing:0.150px;right:1360.85px;">$3.21</span>
<span class="t" id="t119" style="top:1550.63px;font-size:20.4px;color:#4e4e68;letter-spacing:0.150px;right:1123.55px;">N/A</span>
<span class="t" id="t120" style="top:1550.63px;font-size:20.4px;color:#4e4e68;letter-spacing:0.150px;right:886.45px;">0%</span>
<span class="t" id="t121" style="top:1550.63px;font-size:20.4px;color:#4e4e68;letter-spacing:0.150px;right:361.05px;">$0</span>
<span class="t" id="t122" style="top:1550.63px;font-size:20.4px;color:#4e4e68;letter-spacing:0.150px;right:123.65px;">0%</span>
<span class="t" id="t123" style="top:1551.81px;font-size:18.3px;color:#3f9a55;letter-spacing:0.411px;left:2446.20px;">100%</span>
<span class="t" id="t124" style="top:1710.12px;font-size:22.3px;color:#271454;font-weight:700;letter-spacing:-0.015px;left:60.40px;">Cumulative incremental installs</span>
<span class="t" id="t125" style="top:1765.39px;font-size:18.2px;color:#999999;letter-spacing:0.533px;left:75.30px;">install</span>
<span class="t" id="t126" style="top:1804.09px;font-size:19.5px;color:#999999;right:3024.60px;">12500</span>
<span class="t" id="t127" style="top:1871.99px;font-size:19.5px;color:#999999;right:3024.60px;">10000</span>
<span class="t" id="t128" style="top:1942.09px;font-size:19.5px;color:#999999;right:3024.60px;">7500</span>
<span class="t" id="t129" style="top:2011.09px;font-size:19.5px;color:#999999;right:3024.60px;">5000</span>
<span class="t" id="t130" style="top:2079.79px;font-size:19.5px;color:#999999;right:3024.60px;">2500</span>
<span class="t" id="t131" style="top:2149.59px;font-size:19.5px;color:#999999;right:3024.60px;">0</span>
<span class="t" id="t132" style="top:2219.59px;font-size:19.5px;color:#999999;right:3024.60px;">-2500</span>
<span class="t" id="t133" style="top:2256.66px;font-size:19.3px;color:#999999;left:202.20px;transform:translateX(-50%);">Jun 6</span>
<span class="t" id="t134" style="top:2256.66px;font-size:19.3px;color:#999999;left:295.08px;transform:translateX(-50%);">Jun 7</span>
<span class="t" id="t135" style="top:2256.66px;font-size:19.3px;color:#999999;left:387.96px;transform:translateX(-50%);">Jun 8</span>
<span class="t" id="t136" style="top:2256.66px;font-size:19.3px;color:#999999;left:480.84px;transform:translateX(-50%);">Jun 9</span>
<span class="t" id="t137" style="top:2256.66px;font-size:19.3px;color:#999999;left:573.72px;transform:translateX(-50%);">Jun 10</span>
<span class="t" id="t138" style="top:2256.66px;font-size:19.3px;color:#999999;left:666.60px;transform:translateX(-50%);">Jun 11</span>
<span class="t" id="t139" style="top:2256.66px;font-size:19.3px;color:#999999;left:759.48px;transform:translateX(-50%);">Jun 12</span>
<span class="t" id="t140" style="top:2256.66px;font-size:19.3px;color:#999999;left:852.36px;transform:translateX(-50%);">Jun 13</span>
<span class="t" id="t141" style="top:2256.66px;font-size:19.3px;color:#999999;left:945.24px;transform:translateX(-50%);">Jun 14</span>
<span class="t" id="t142" style="top:2256.66px;font-size:19.3px;color:#999999;left:1038.12px;transform:translateX(-50%);">Jun 15</span>
<span class="t" id="t143" style="top:2256.66px;font-size:19.3px;color:#999999;left:1131.00px;transform:translateX(-50%);">Jun 16</span>
<span class="t" id="t144" style="top:2256.66px;font-size:19.3px;color:#999999;left:1223.88px;transform:translateX(-50%);">Jun 17</span>
<span class="t" id="t145" style="top:2256.66px;font-size:19.3px;color:#999999;left:1316.76px;transform:translateX(-50%);">Jun 18</span>
<span class="t" id="t146" style="top:2256.66px;font-size:19.3px;color:#999999;left:1409.64px;transform:translateX(-50%);">Jun 19</span>
<span class="t" id="t147" style="top:2256.66px;font-size:19.3px;color:#999999;left:1502.52px;transform:translateX(-50%);">Jun 20</span>
<span class="t" id="t148" style="top:2256.66px;font-size:19.3px;color:#999999;left:1595.40px;transform:translateX(-50%);">Jun 21</span>
<span class="t" id="t149" style="top:2256.66px;font-size:19.3px;color:#999999;left:1688.28px;transform:translateX(-50%);">Jun 22</span>
<span class="t" id="t150" style="top:2256.66px;font-size:19.3px;color:#999999;left:1781.16px;transform:translateX(-50%);">Jun 23</span>
<span class="t" id="t151" style="top:2256.66px;font-size:19.3px;color:#999999;left:1874.04px;transform:translateX(-50%);">Jun 24</span>
<span class="t" id="t152" style="top:2256.66px;font-size:19.3px;color:#999999;left:1966.92px;transform:translateX(-50%);">Jun 25</span>
<span class="t" id="t153" style="top:2256.66px;font-size:19.3px;color:#999999;left:2059.80px;transform:translateX(-50%);">Jun 26</span>
<span class="t" id="t154" style="top:2256.66px;font-size:19.3px;color:#999999;left:2152.68px;transform:translateX(-50%);">Jun 27</span>
<span class="t" id="t155" style="top:2256.66px;font-size:19.3px;color:#999999;left:2245.56px;transform:translateX(-50%);">Jun 28</span>
<span class="t" id="t156" style="top:2256.66px;font-size:19.3px;color:#999999;left:2338.44px;transform:translateX(-50%);">Jun 29</span>
<span class="t" id="t157" style="top:2256.66px;font-size:19.3px;color:#999999;left:2431.32px;transform:translateX(-50%);">Jun 30</span>
<span class="t" id="t158" style="top:2256.66px;font-size:19.3px;color:#999999;left:2524.20px;transform:translateX(-50%);">Jul 1</span>
<span class="t" id="t159" style="top:2256.66px;font-size:19.3px;color:#999999;left:2617.08px;transform:translateX(-50%);">Jul 2</span>
<span class="t" id="t160" style="top:2256.66px;font-size:19.3px;color:#999999;left:2709.96px;transform:translateX(-50%);">Jul 3</span>
<span class="t" id="t161" style="top:2256.66px;font-size:19.3px;color:#999999;left:2802.84px;transform:translateX(-50%);">Jul 4</span>
<span class="t" id="t162" style="top:2256.66px;font-size:19.3px;color:#999999;left:2895.72px;transform:translateX(-50%);">Jul 5</span>
<span class="t" id="t163" style="top:2256.66px;font-size:19.3px;color:#999999;left:2988.60px;transform:translateX(-50%);">Jul 6</span>
<span class="t" id="t164" style="top:2348.47px;font-size:18.7px;color:#595079;letter-spacing:0.485px;left:1255.50px;">Cell 1 - Network A</span>
<span class="t" id="t165" style="top:2348.47px;font-size:18.7px;color:#595079;letter-spacing:0.472px;left:1475.20px;">Cell 2 - Network...</span>
<span class="t" id="t166" style="top:2348.47px;font-size:18.7px;color:#595079;letter-spacing:0.461px;left:1695.80px;">Cell 3 - Network...</span>
</div></body></html>
